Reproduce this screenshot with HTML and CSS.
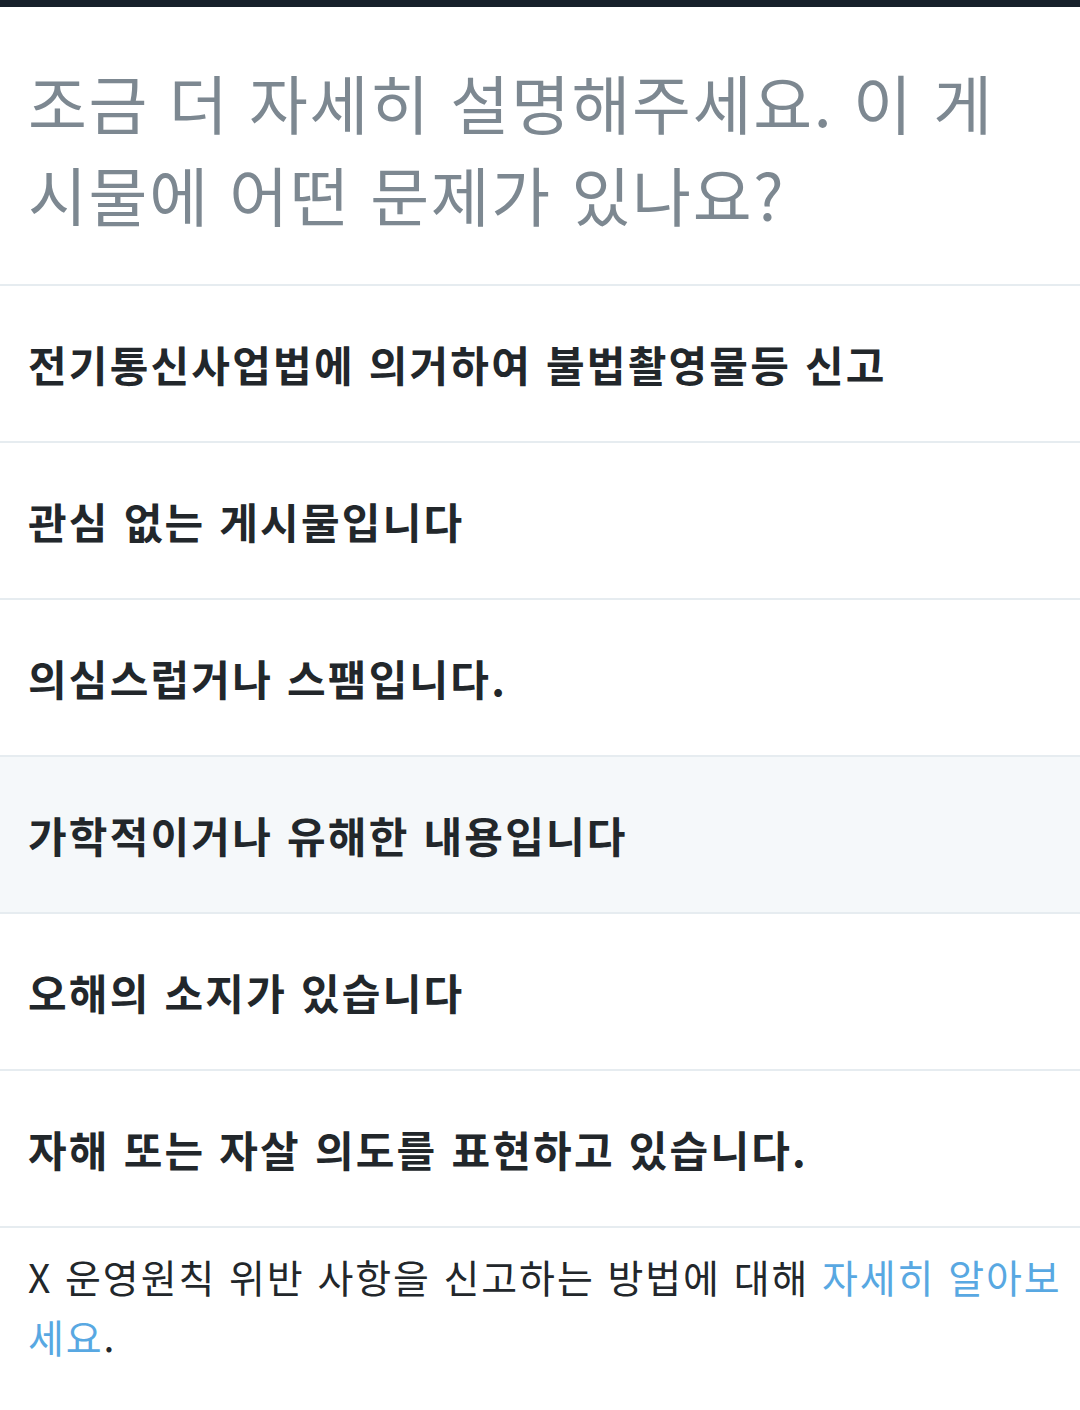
FILE: index.html
```html
<!DOCTYPE html>
<html lang="ko">
<head>
<meta charset="utf-8">
<link rel="stylesheet" href="styles.css">
</head>
<body>
<div class="topbar"></div>
<main class="page">
  <h1 class="title">조금 더 자세히 설명해주세요. 이 게시물에 어떤 문제가 있나요?</h1>
  <ul class="options">
    <li class="option">전기통신사업법에 의거하여 불법촬영물등 신고</li>
    <li class="option">관심 없는 게시물입니다</li>
    <li class="option">의심스럽거나 스팸입니다.</li>
    <li class="option option--active">가학적이거나 유해한 내용입니다</li>
    <li class="option">오해의 소지가 있습니다</li>
    <li class="option">자해 또는 자살 의도를 표현하고 있습니다.</li>
  </ul>
  <p class="footer">X 운영원칙 위반 사항을 신고하는 방법에 대해 <a class="link" href="#">자세히 알아보세요</a>.</p>
</main>
</body>
</html>
```

FILE: styles.css
```css
html, body {
  margin: 0;
  padding: 0;
  background: #ffffff;
}
body {
  font-family: "Noto Sans CJK KR", "Noto Sans", sans-serif;
  color: #22272b;
}
.topbar {
  height: 7px;
  background: #17202a;
}
.page {
  display: flex;
  flex-direction: column;
}
.title {
  margin: 0;
  padding: 48px 45px 45px 28px;
  font-size: 64px;
  font-weight: 400;
  line-height: 92px;
  letter-spacing: 1.7px;
  color: #7d8891;
}
.options {
  list-style: none;
  margin: 0;
  padding: 0;
  border-top: 2px solid #e6ecf0;
}
.option {
  height: 155px;
  display: flex;
  align-items: center;
  padding: 0 28px;
  border-bottom: 2px solid #e6ecf0;
  font-size: 42px;
  font-weight: 700;
  letter-spacing: 2.2px;
  color: #22272b;
}
.option--active {
  background: #f5f8fa;
}
.footer {
  margin: 0;
  padding: 18px 10px 0 28px;
  font-size: 39px;
  line-height: 60px;
  letter-spacing: 1.9px;
  color: #22272b;
}
.link {
  color: #58a8e2;
  text-decoration: none;
}
```
